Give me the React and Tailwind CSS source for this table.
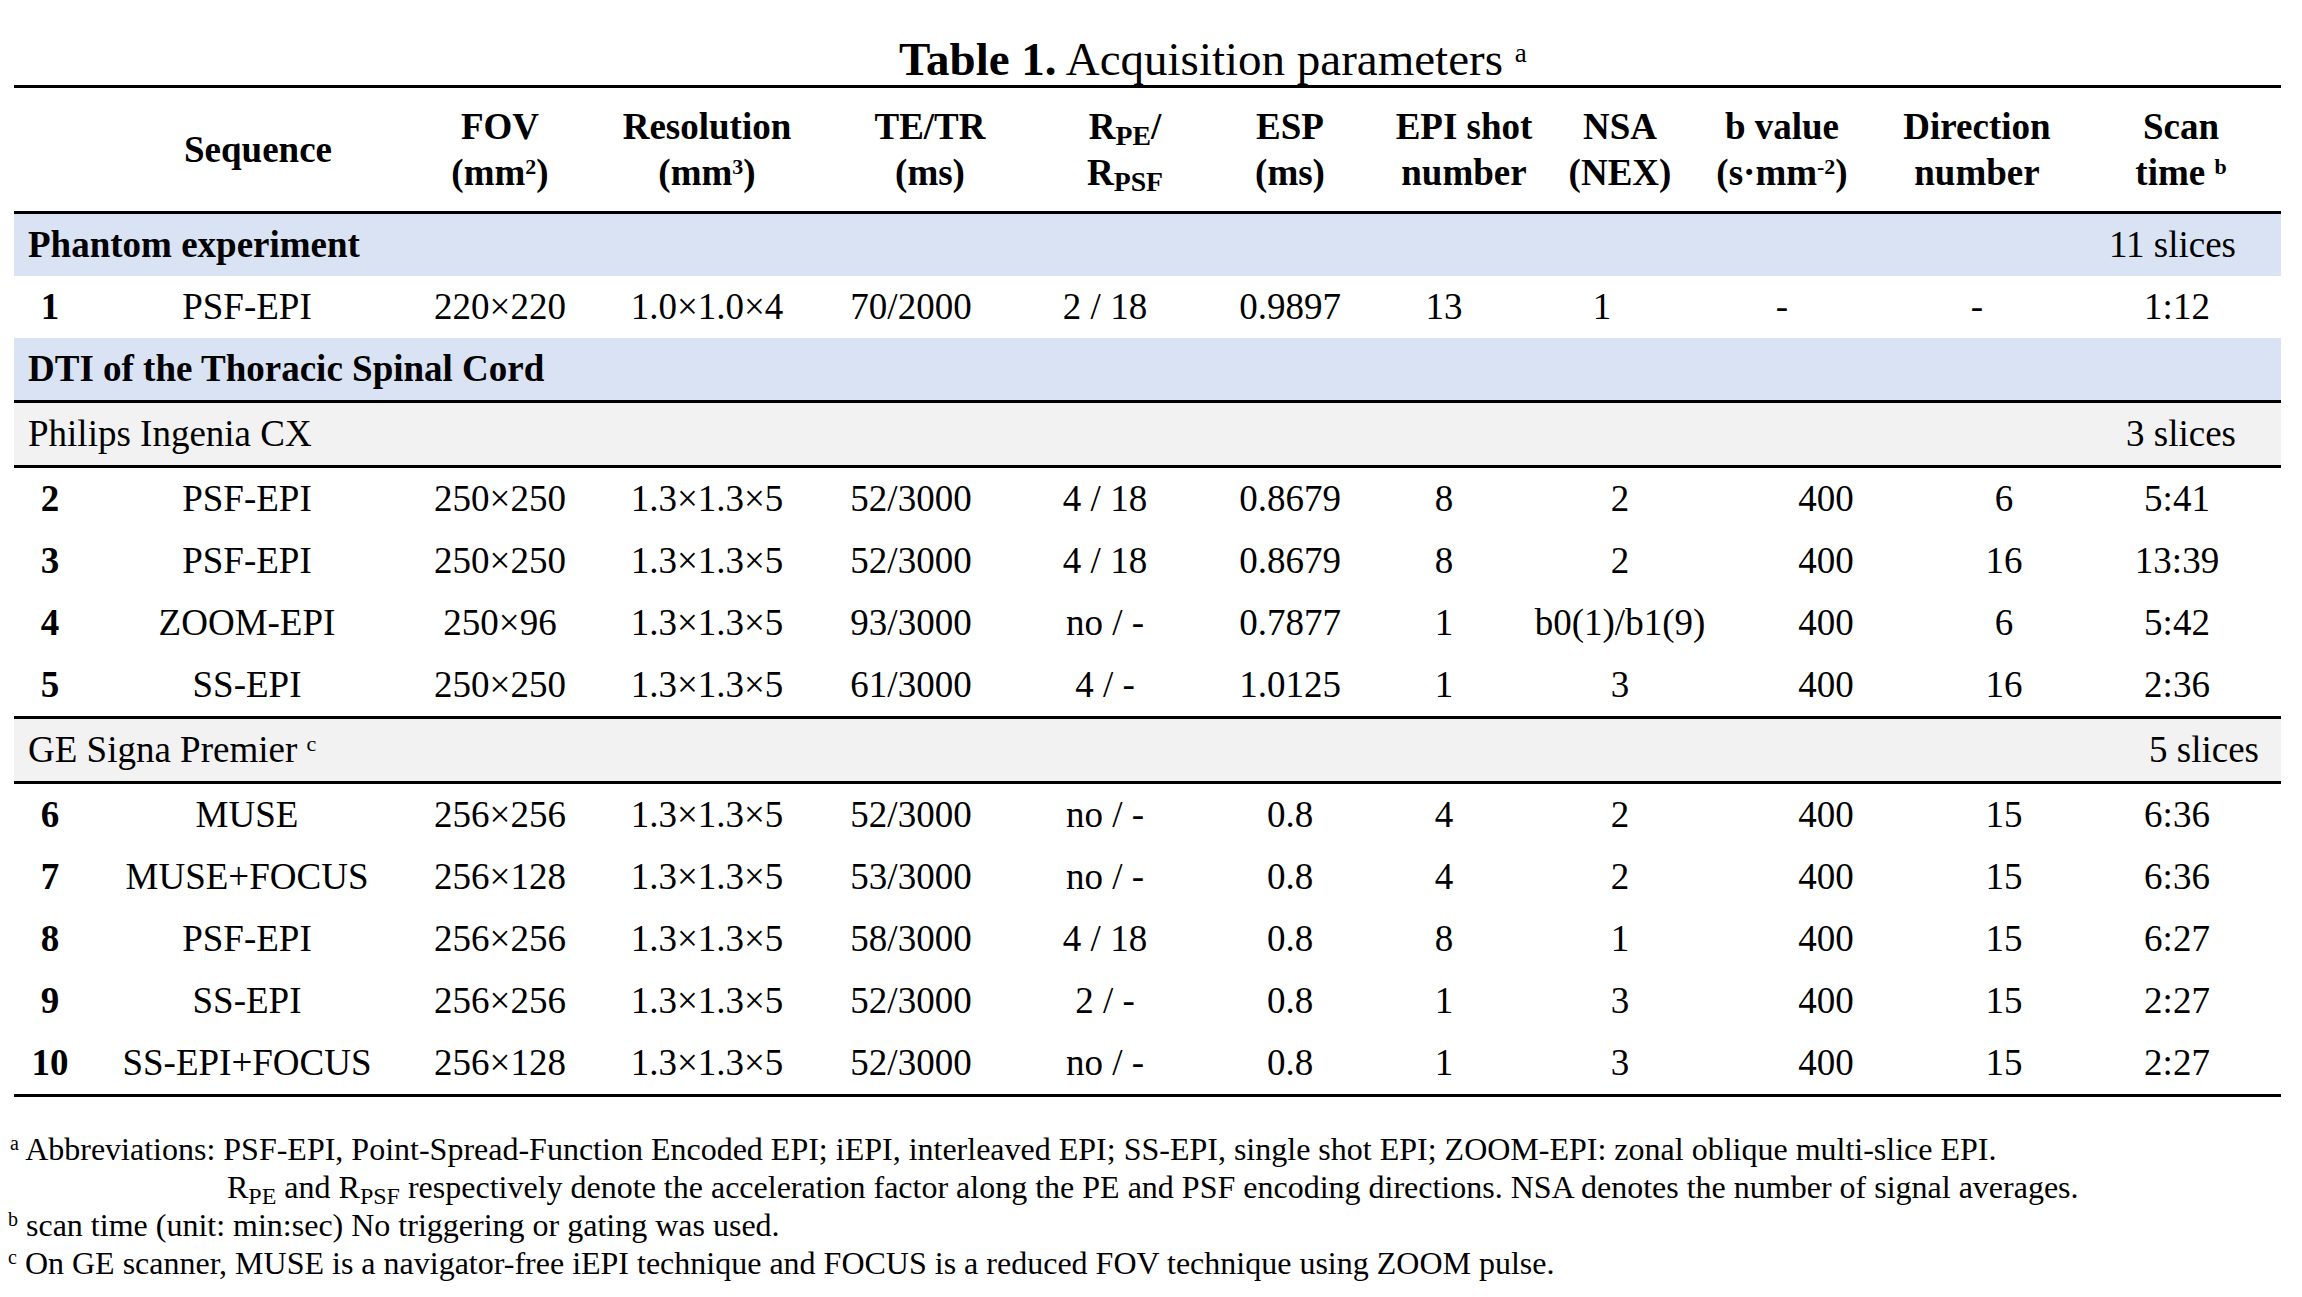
import React from "react";

const GRID =
  "grid grid-cols-[72px_322px_184px_230px_178px_210px_160px_148px_204px_208px_148px_198px]";

const Cell = ({ children, className = "" }) => (
  <div className={"flex justify-center whitespace-nowrap " + className}>{children}</div>
);

const HCell = ({ lines, className = "" }) => (
  <div className={"flex flex-col items-center justify-center whitespace-nowrap " + className}>
    {lines.map((l, i) => (
      <div key={i}>{l}</div>
    ))}
  </div>
);

const Rule = () => <div className="h-[3px] bg-black" />;

const DataRow = ({ cells, extra = {} }) => (
  <div className={GRID + " h-[62px] items-center leading-[62px] text-[37px]"}>
    {cells.map((c, i) => (
      <Cell key={i} className={(i === 0 ? "font-bold " : "") + (extra[i] || "")}>
        {c}
      </Cell>
    ))}
  </div>
);

const Band = ({ left, right, blue, bold, pr = "pr-[45px]" }) => (
  <div
    className={
      "flex h-[62px] items-center justify-between pl-[14px] leading-[62px] text-[37px] whitespace-nowrap " +
      pr +
      " " +
      (blue ? "bg-[#dae3f3]" : "bg-[#f2f2f2]")
    }
  >
    <span className={bold ? "font-bold" : ""}>{left}</span>
    <span>{right}</span>
  </div>
);

const philips = [
  ["2", "PSF-EPI", "250×250", "1.3×1.3×5", "52/3000", "4 / 18", "0.8679", "8", "2", "400", "6", "5:41"],
  ["3", "PSF-EPI", "250×250", "1.3×1.3×5", "52/3000", "4 / 18", "0.8679", "8", "2", "400", "16", "13:39"],
  ["4", "ZOOM-EPI", "250×96", "1.3×1.3×5", "93/3000", "no / -", "0.7877", "1", "b0(1)/b1(9)", "400", "6", "5:42"],
  ["5", "SS-EPI", "250×250", "1.3×1.3×5", "61/3000", "4 / -", "1.0125", "1", "3", "400", "16", "2:36"],
];

const ge = [
  ["6", "MUSE", "256×256", "1.3×1.3×5", "52/3000", "no / -", "0.8", "4", "2", "400", "15", "6:36"],
  ["7", "MUSE+FOCUS", "256×128", "1.3×1.3×5", "53/3000", "no / -", "0.8", "4", "2", "400", "15", "6:36"],
  ["8", "PSF-EPI", "256×256", "1.3×1.3×5", "58/3000", "4 / 18", "0.8", "8", "1", "400", "15", "6:27"],
  ["9", "SS-EPI", "256×256", "1.3×1.3×5", "52/3000", "2 / -", "0.8", "1", "3", "400", "15", "2:27"],
  ["10", "SS-EPI+FOCUS", "256×128", "1.3×1.3×5", "52/3000", "no / -", "0.8", "1", "3", "400", "15", "2:27"],
];

export default function App() {
  return (
    <div className="w-[2302px] h-[1297px] overflow-hidden bg-white text-black font-['Liberation_Serif',serif]">
      {/* Title */}
      <div className="pt-[36px] pl-[899px] text-[47px] leading-[47px] whitespace-nowrap">
        <span className="font-bold">Table 1.</span> Acquisition parameters{" "}
        <sup className="text-[27px]">a</sup>
      </div>

      {/* Table */}
      <div className="mt-[2px] ml-[14px] w-[2267px]">
        <Rule />
        <div className={GRID + " h-[123px] items-center text-[37px] leading-[46px] font-bold"}>
          <div />
          <HCell className="pl-[22px]" lines={["Sequence"]} />
          <HCell
            lines={[
              "FOV",
              <>
                (mm<sup className="text-[22px]">2</sup>)
              </>,
            ]}
          />
          <HCell
            lines={[
              "Resolution",
              <>
                (mm<sup className="text-[22px]">3</sup>)
              </>,
            ]}
          />
          <HCell className="pl-[38px]" lines={["TE/TR", "(ms)"]} />
          <HCell
            className="pl-[40px]"
            lines={[
              <>
                R<sub>PE</sub>/
              </>,
              <>
                R<sub>PSF</sub>
              </>,
            ]}
          />
          <HCell lines={["ESP", "(ms)"]} />
          <HCell className="pl-[40px]" lines={["EPI shot", "number"]} />
          <HCell lines={["NSA", "(NEX)"]} />
          <HCell
            className="pr-[88px]"
            lines={[
              "b value",
              <>
                (s·mm<sup className="text-[22px]">-2</sup>)
              </>,
            ]}
          />
          <HCell className="pr-[54px]" lines={["Direction", "number"]} />
          <HCell
            className="pl-[8px]"
            lines={[
              "Scan",
              <>
                time <sup className="text-[22px]">b</sup>
              </>,
            ]}
          />
        </div>
        <Rule />

        <Band blue bold left="Phantom experiment" right="11 slices" />
        <DataRow
          cells={["1", "PSF-EPI", "220×220", "1.0×1.0×4", "70/2000", "2 / 18", "0.9897", "13", "1", "-", "-", "1:12"]}
          extra={{ 8: "pr-[36px]", 9: "pr-[88px]", 10: "pr-[54px]" }}
        />
        <Band blue bold left="DTI of the Thoracic Spinal Cord" right="" />
        <Rule />
        <Band left="Philips Ingenia CX" right="3 slices" />
        <Rule />
        {philips.map((r) => (
          <DataRow key={r[0]} cells={r} />
        ))}
        <Rule />
        <Band
          left={
            <>
              GE Signa Premier <sup className="text-[22px]">c</sup>
            </>
          }
          right="5 slices"
          pr="pr-[22px]"
        />
        <Rule />
        {ge.map((r) => (
          <DataRow key={r[0]} cells={r} />
        ))}
        <Rule />
      </div>

      {/* Footnotes */}
      <div className="mt-[33px] text-[32px] leading-[38px] whitespace-nowrap">
        <div className="pl-[10px]">
          <sup className="text-[20px]">a</sup> Abbreviations: PSF-EPI, Point-Spread-Function Encoded EPI; iEPI,
          interleaved EPI; SS-EPI, single shot EPI; ZOOM-EPI: zonal oblique multi-slice EPI.
        </div>
        <div className="pl-[227px]">
          R<sub>PE</sub> and R<sub>PSF</sub> respectively denote the acceleration factor along the PE and PSF
          encoding directions. NSA denotes the number of signal averages.
        </div>
        <div className="pl-[8px]">
          <sup className="text-[20px]">b</sup> scan time (unit: min:sec) No triggering or gating was used.
        </div>
        <div className="pl-[8px]">
          <sup className="text-[20px]">c</sup> On GE scanner, MUSE is a navigator-free iEPI technique and FOCUS is a
          reduced FOV technique using ZOOM pulse.
        </div>
      </div>
    </div>
  );
}
